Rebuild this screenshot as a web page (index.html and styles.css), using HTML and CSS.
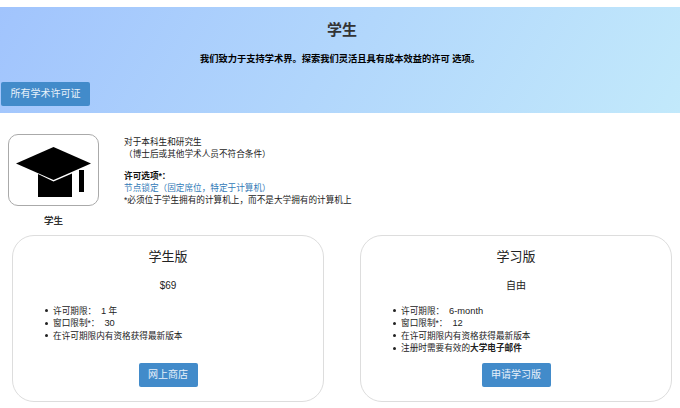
FILE: index.html
```html
<!DOCTYPE html>
<html lang="zh">
<head>
<meta charset="utf-8">
<title>学生</title>
<link rel="stylesheet" href="styles.css">
</head>
<body>
<section class="banner">
  <h1 class="banner-title">学生</h1>
  <p class="banner-sub">我们致力于支持学术界。探索我们灵活且具有成本效益的许可 选项。</p>
  <a class="btn btn-banner">所有学术许可证</a>
</section>
<section class="intro">
  <div class="intro-icon">
    <div class="icon-box">
      <svg class="cap" viewBox="0 0 75 50" width="75" height="50">
        <path d="M37.5 0 L75 16.5 L37.5 33 L0 16.5 Z" fill="#000"/>
        <path d="M22 27 L37.5 34.5 L56 26.5 L56 50 L22 50 Z" fill="#000"/>
        <rect x="63" y="23" width="5" height="22" fill="#000"/>
      </svg>
    </div>
    <div class="icon-label">学生</div>
  </div>
  <div class="intro-text">
    <p>对于本科生和研究生<br>（博士后或其他学术人员不符合条件）</p>
    <p class="opts"><b>许可选项*：</b><br><a class="link">节点锁定（固定席位，特定于计算机）</a><br>*必须位于学生拥有的计算机上，而不是大学拥有的计算机上</p>
  </div>
</section>
<section class="cards">
  <article class="card">
    <h2 class="card-title">学生版</h2>
    <div class="price">$69</div>
    <ul class="features">
      <li>许可期限： <span class="val">1</span> 年</li>
      <li>窗口限制*： <span class="val">30</span></li>
      <li>在许可期限内有资格获得最新版本</li>
    </ul>
    <a class="btn">网上商店</a>
  </article>
  <article class="card">
    <h2 class="card-title">学习版</h2>
    <div class="price">自由</div>
    <ul class="features">
      <li>许可期限： <span class="val">6-month</span></li>
      <li>窗口限制*： <span class="val">12</span></li>
      <li>在许可期限内有资格获得最新版本</li>
      <li>注册时需要有效的<b>大学电子邮件</b></li>
    </ul>
    <a class="btn">申请学习版</a>
  </article>
</section>
</body>
</html>
```
FILE: styles.css
```css
* { box-sizing: border-box; }
html, body { margin: 0; padding: 0; }
body {
  width: 680px;
  height: 408px;
  overflow: hidden;
  background: #fff;
  color: #222;
  font-family: "Liberation Sans", "Noto Sans CJK SC", sans-serif;
  font-size: 8.65px;
  line-height: 12.3px;
  padding-top: 7px;
}
.banner {
  height: 106px;
  background: linear-gradient(120deg, #a1c4fd 0%, #c2e9fb 100%);
  padding-top: 14px;
  display: flex;
  flex-direction: column;
  align-items: center;
}
.banner-title {
  margin: 0 0 0 4px;
  font-size: 15px;
  line-height: 18px;
  font-weight: 700;
  color: #333;
}
.banner-sub {
  margin: 14px 0 0;
  font-size: 9.25px;
  line-height: 12px;
  font-weight: 700;
  color: #000;
}
.btn {
  display: inline-block;
  height: 24px;
  padding: 0 9.5px;
  line-height: 24px;
  font-size: 10px;
  color: #e8f1fa;
  background: #428bca;
  border: 0;
  border-radius: 2px;
  white-space: nowrap;
}
.btn-banner {
  align-self: flex-start;
  margin: 17px 0 0 1px;
}
.intro {
  display: flex;
  padding: 21px 0 0 8px;
  height: 122px;
}
.intro-icon { width: 91px; }
.icon-box {
  width: 91px;
  height: 72px;
  border: 1px solid #aaa;
  border-radius: 10px;
  display: flex;
  align-items: center;
  justify-content: center;
  padding-top: 4px;
}
.icon-label {
  margin-top: 9px;
  text-align: center;
  font-size: 9.5px;
  line-height: 12px;
  font-weight: 700;
  color: #333;
}
.intro-text { margin-left: 25px; padding-top: 2px; }
.intro-text p { margin: 0; }
.intro-text .opts { margin-top: 9px; }
.intro-text b { color: #111; }
.link { color: #337ab7; }
.cards {
  display: flex;
  gap: 36px;
  padding-left: 12px;
}
.card {
  width: 312px;
  height: 167px;
  border: 1px solid #ddd;
  border-radius: 22px;
  display: flex;
  flex-direction: column;
  align-items: center;
}
.card-title {
  margin: 13px 0 0;
  font-size: 13px;
  line-height: 16px;
  font-weight: 400;
  color: #222;
}
.price {
  margin-top: 14px;
  font-size: 10px;
  line-height: 14px;
  color: #222;
}
.features {
  align-self: stretch;
  margin: 12px 0 0;
  padding: 0 0 0 40px;
  flex: 1;
  list-style: none;
}
.features li { line-height: 12.4px; }
.features li::before {
  content: "";
  display: inline-block;
  width: 3px;
  height: 3px;
  margin: 0 5px 1.5px -8px;
  border-radius: 50%;
  background: #222;
  vertical-align: middle;
}
.val { font-size: 9.3px; margin-left: 2.5px; }
.card .btn { margin-bottom: 14px; }
```
